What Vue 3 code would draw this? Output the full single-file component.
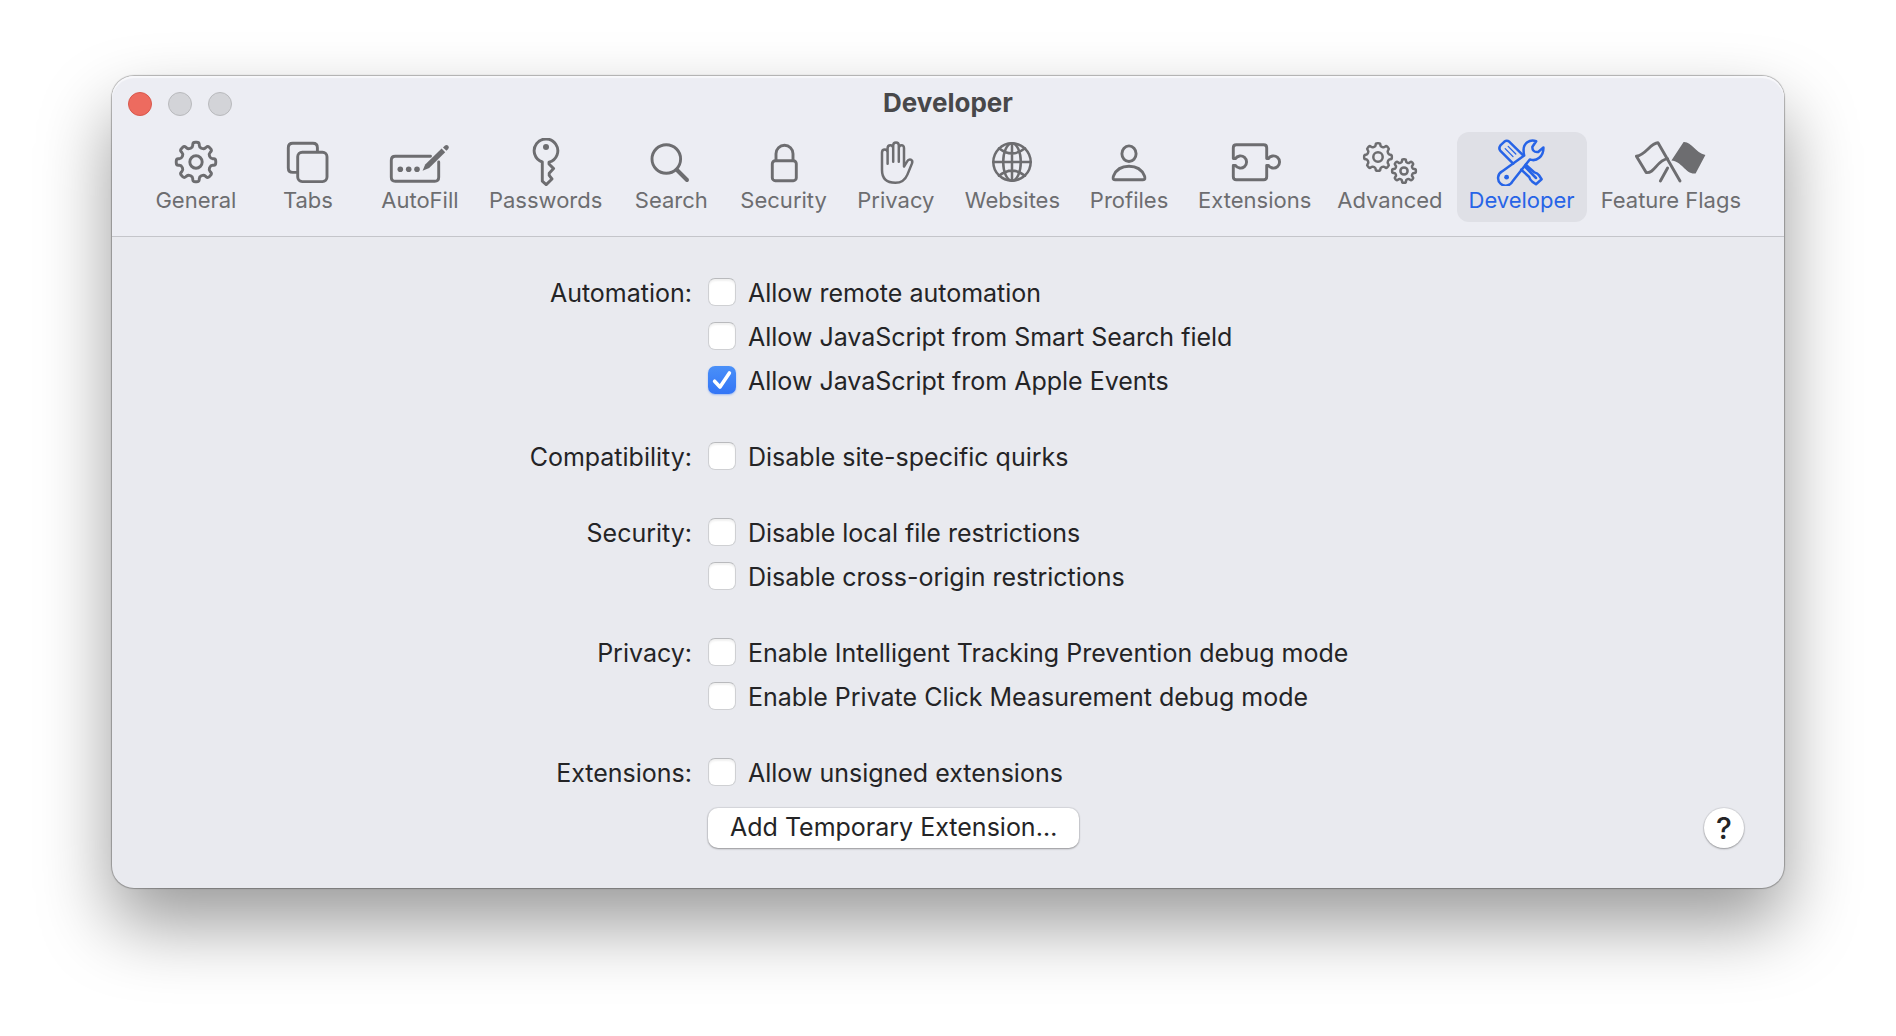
<script setup>
import { reactive, ref } from 'vue'

// Closed outline of an eight-toothed gear with softened corners.
function gearPath(cx, cy, outer, root) {
  const teeth = 8
  const points = []
  for (let i = 0; i < teeth; i++) {
    const mid = (i * 360) / teeth - 90
    for (const [offset, radius] of [[-13, root], [-9, outer], [9, outer], [13, root]]) {
      const angle = ((mid + offset) * Math.PI) / 180
      points.push([cx + radius * Math.cos(angle), cy + radius * Math.sin(angle)])
    }
  }
  const between = (a, b, t) => `${(a[0] + (b[0] - a[0]) * t).toFixed(2)} ${(a[1] + (b[1] - a[1]) * t).toFixed(2)}`
  return points
    .map((p, i) => {
      const prev = points[(i + points.length - 1) % points.length]
      const next = points[(i + 1) % points.length]
      return `${i ? 'L' : 'M'}${between(p, prev, 0.4)}Q${p[0].toFixed(2)} ${p[1].toFixed(2)} ${between(p, next, 0.4)}`
    })
    .join('') + 'Z'
}

const gear = gearPath(36, 24, 20, 15)
const gearBig = gearPath(24, 19, 14, 11)
const gearSmall = gearPath(50, 33, 12, 9)

const tabs = [
  'General', 'Tabs', 'AutoFill', 'Passwords', 'Search', 'Security', 'Privacy',
  'Websites', 'Profiles', 'Extensions', 'Advanced', 'Developer', 'Feature Flags',
]
const active = ref('Developer')

const groups = reactive([
  {
    name: 'Automation',
    options: [
      { text: 'Allow remote automation', on: false },
      { text: 'Allow JavaScript from Smart Search field', on: false },
      { text: 'Allow JavaScript from Apple Events', on: true },
    ],
  },
  { name: 'Compatibility', options: [{ text: 'Disable site-specific quirks', on: false }] },
  {
    name: 'Security',
    options: [
      { text: 'Disable local file restrictions', on: false },
      { text: 'Disable cross-origin restrictions', on: false },
    ],
  },
  {
    name: 'Privacy',
    options: [
      { text: 'Enable Intelligent Tracking Prevention debug mode', on: false },
      { text: 'Enable Private Click Measurement debug mode', on: false },
    ],
  },
  { name: 'Extensions', options: [{ text: 'Allow unsigned extensions', on: false }], action: 'Add Temporary Extension…' },
])
</script>

<template>
  <main class="desktop">
    <section class="window" aria-labelledby="window-title">
      <header class="header">
        <div class="titlebar">
          <div class="lights">
            <button class="light close" type="button" aria-label="Close"></button>
            <button class="light" type="button" aria-label="Minimize" disabled></button>
            <button class="light" type="button" aria-label="Zoom" disabled></button>
          </div>
          <h1 id="window-title" class="title">{{ active }}</h1>
        </div>
        <nav class="toolbar">
          <button
            v-for="tab in tabs"
            :key="tab"
            type="button"
            class="tab"
            :class="{ active: tab === active }"
            @click="active = tab"
          >
            <svg class="icon" viewBox="0 0 72 48" aria-hidden="true">
              <g v-if="tab === 'General'">
                <path :d="gear" />
                <circle cx="36" cy="24" r="6.2" />
              </g>
              <g v-else-if="tab === 'Tabs'">
                <rect x="25.7" y="14.3" width="29.3" height="29.3" rx="4.5" />
                <path d="M45.4 13V9.8Q45.4 5.3 40.9 5.3H20.8Q16.3 5.3 16.3 9.8V29.9Q16.3 34.4 20.8 34.4H24.5" />
              </g>
              <g v-else-if="tab === 'AutoFill'">
                <path d="M46.5 18.3H11.3Q7.3 18.3 7.3 22.3V39.3Q7.3 43.3 11.3 43.3H50.7Q54.7 43.3 54.7 39.3V24" />
                <g class="solid">
                  <circle cx="16.3" cy="31.3" r="2.8" />
                  <circle cx="24.7" cy="31.3" r="2.8" />
                  <circle cx="33" cy="31.3" r="2.8" />
                  <path d="M38.6 32.8L41.2 26.4L57.6 10.6L61.2 14.2L45.2 30Z" />
                  <path d="M59 9.4L61 7.6Q62.6 6.2 64.2 7.8Q65.6 9.4 64.2 11L62.4 12.8Z" />
                </g>
              </g>
              <g v-else-if="tab === 'Passwords'">
                <path d="M32.3 24A11.8 11.8 0 1 1 39 24.2V26L43.6 30.6L39.2 35.2V37.4L42 41L36.2 46.6L32.3 43.2Z" />
                <circle class="solid" cx="36" cy="9" r="3" />
              </g>
              <g v-else-if="tab === 'Search'">
                <circle cx="31.3" cy="21" r="14.3" />
                <path class="heavy" d="M42 32L52 42" />
              </g>
              <g v-else-if="tab === 'Security'">
                <rect x="24.3" y="22.7" width="24" height="20" rx="3" />
                <path d="M28 22.5V15.8A8.5 8.5 0 0 1 45 15.8V22.5" />
              </g>
              <g v-else-if="tab === 'Privacy'" class="fine">
                <path d="M27.6 25.7V10.2Q27.6 7.2 30.4 7.2T33.2 10.2V23.7M33.2 10V7.6Q33.2 4.6 36 4.6T38.8 7.6V23.7M38.8 10.2Q38.8 7.2 41.4 7.2T44 10.2V28.6L47 23.6Q48.4 21 50.8 21.6Q53 22.6 52 25.4L47.4 36.6Q44 44.8 35.4 44.8Q22 44.8 22 32V14.4Q22 11.4 24.8 11.4T27.6 14.4" />
              </g>
              <g v-else-if="tab === 'Websites'" class="fine">
                <circle cx="36" cy="24" r="18.7" />
                <ellipse cx="36" cy="24" rx="8.8" ry="18.7" />
                <path d="M36 5.3V42.7M17.3 24H54.7M23 10.2Q36 20.6 49 10.2M23 37.8Q36 27.4 49 37.8" />
              </g>
              <g v-else-if="tab === 'Profiles'">
                <ellipse cx="36" cy="15.7" rx="7.1" ry="7.8" />
                <path d="M22 41.7H50Q53 41.7 51.4 37.8C48.8 31.6 43 28.3 36 28.3S23.2 31.6 20.6 37.8Q19 41.7 22 41.7Z" />
              </g>
              <g v-else-if="tab === 'Extensions'">
                <path d="M14.3 20.6V9.7Q14.3 6.7 17.3 6.7H44.7Q47.7 6.7 47.7 9.7V20.6H49.4A6.1 6.1 0 1 1 49.4 27.4H47.7V38.7Q47.7 41.7 44.7 41.7H17.3Q14.3 41.7 14.3 38.7V27.4H16.4A6.1 6.1 0 1 0 16.4 20.6Z" />
              </g>
              <g v-else-if="tab === 'Advanced'" class="fine">
                <path :d="gearBig" />
                <circle cx="24" cy="19" r="4.7" />
                <path :d="gearSmall" />
                <circle cx="50" cy="33" r="3.6" />
              </g>
              <g v-else-if="tab === 'Developer'" class="fine">
                <path d="M50.2 3.2C43.6 0.8 37.2 5.4 37.6 12.6Q37.6 15.8 38.2 17.6L16 33.4A7.6 7.6 0 1 0 26.6 43.2L43.8 21.4C50.4 24 57.8 18.6 57.4 9.4L52.2 14Q49 14.4 47.6 12.8T46.4 8.8Z" />
                <circle class="solid" cx="20.6" cy="39.2" r="2.4" />
                <path d="M27.2 25.6L14.2 12.6Q12.4 10 14.4 7.4L18.2 3.8Q20.8 1.8 23.4 3.8L37.2 17.4" />
                <path class="hair" d="M19.2 10.6L27 18.6M22.2 8.4L29.8 16" />
                <path d="M35.2 31.6L43.2 39Q44 42 46.2 43.6L50 46.2L55.6 41.2L53 37.2Q51.6 35.2 48.4 34.4L39.8 26.6M39.4 29.2L50 40" />
              </g>
              <g v-else>
                <path d="M45 43L23 4.8C15 5.2 11 17 1.4 18.2L11.2 34.6C20 35.4 21.6 22.4 32.6 20.6" />
                <path d="M32.6 30L25.4 43" />
                <path class="solid" d="M48.6 4C56.4 3.4 60 14.4 70.4 17L60.6 35.4C51 36.8 47 23 36.4 22.4Z" />
              </g>
            </svg>
            <span class="tab-label">{{ tab }}</span>
          </button>
        </nav>
      </header>

      <form class="content" @submit.prevent>
        <div v-for="group in groups" :key="group.name" class="group" role="group" :aria-label="group.name">
          <span class="group-name">{{ group.name }}:</span>
          <div class="options">
            <label v-for="option in group.options" :key="option.text" class="option">
              <span class="check">
                <input v-model="option.on" type="checkbox" class="box" />
                <svg v-if="option.on" class="tick" viewBox="0 0 28 28" aria-hidden="true">
                  <path d="M6.6 15.2L12 21L21.4 7" />
                </svg>
              </span>
              <span class="option-text">{{ option.text }}</span>
            </label>
            <div v-if="group.action" class="actions">
              <button type="button" class="push">{{ group.action }}</button>
              <button type="button" class="help" aria-label="Help">?</button>
            </div>
          </div>
        </div>
      </form>
    </section>
  </main>
</template>

<style>
body {
  margin: 0;
  background: #fff;
}
</style>

<style scoped>
.desktop {
  padding: 76px 112px 148px;
  font-family: Inter, "Liberation Sans", sans-serif;
  color: #242426;
}

.window {
  border-radius: 22px;
  background: #e9eaef;
  box-shadow:
    0 0 1px 1px rgba(0, 0, 0, 0.28),
    0 36px 72px rgba(0, 0, 0, 0.4);
}

.header {
  padding-bottom: 14px;
  border-bottom: 1px solid #c4c5ca;
  border-radius: 22px 22px 0 0;
  background: #ecedf3;
  box-shadow: inset 0 2px 1px #f8f8fb;
}

.titlebar {
  display: grid;
  grid-template-columns: 1fr auto 1fr;
  align-items: center;
  height: 56px;
  padding: 0 16px;
}

.lights {
  display: flex;
  gap: 16px;
}

.light {
  width: 24px;
  height: 24px;
  padding: 0;
  border: 1px solid #b9babd;
  border-radius: 50%;
  background: #d3d4d8;
}

.close {
  border-color: #d9584c;
  background: #ed6b5f;
}

.title {
  margin: 0;
  padding-bottom: 2px;
  font-size: 26px;
  line-height: 32px;
  font-weight: 700;
  color: #48484a;
}

.toolbar {
  display: flex;
  justify-content: center;
  gap: 2px;
  padding-right: 2px;
}

.tab {
  display: flex;
  flex-direction: column;
  align-items: center;
  box-sizing: border-box;
  min-width: 110px;
  height: 90px;
  padding: 6px 12px;
  border: 0;
  border-radius: 12px;
  background: none;
  font: inherit;
  color: #6d6d70;
}

.tab.active {
  background: #dfe0e6;
  color: #2764e7;
}

.tab-label {
  font-size: 22px;
  line-height: 28px;
  white-space: nowrap;
}

.icon {
  width: 72px;
  height: 48px;
  flex: none;
  fill: none;
  stroke: currentColor;
  stroke-width: 2.9;
  stroke-linecap: round;
  stroke-linejoin: round;
}

.fine {
  stroke-width: 2.5;
}

.hair {
  stroke-width: 1.3;
}

.heavy {
  stroke-width: 4;
}

.solid {
  fill: currentColor;
  stroke: none;
}

.content {
  display: flex;
  flex-direction: column;
  gap: 32px;
  padding: 33px 40px 40px 0;
}

.group {
  display: grid;
  grid-template-columns: calc(50% - 236px) 1fr;
  column-gap: 16px;
  font-size: 25px;
  line-height: 44px;
}

.group-name,
.option-text {
  padding-top: 2px;
  line-height: 42px;
}

.group-name {
  text-align: right;
}

.options {
  display: flex;
  flex-direction: column;
}

.option {
  display: flex;
  align-items: center;
  gap: 12px;
  white-space: nowrap;
}

.check {
  display: grid;
}

.box,
.tick {
  grid-area: 1 / 1;
  width: 28px;
  height: 28px;
}

.box {
  appearance: none;
  box-sizing: border-box;
  margin: 0;
  border: 1px solid #cfd0d3;
  border-top-color: #b9babd;
  border-radius: 7px;
  background: #fff;
  box-shadow: inset 0 2px 2px rgba(0, 0, 0, 0.06);
}

.box:checked {
  border: 0;
  background: linear-gradient(#4a90f8, #3375f6);
  box-shadow: 0 1px 2px rgba(51, 117, 246, 0.4);
}

.tick {
  pointer-events: none;
  fill: none;
  stroke: #fff;
  stroke-width: 3.6;
  stroke-linecap: round;
  stroke-linejoin: round;
}

.actions {
  display: flex;
  justify-content: space-between;
  padding-top: 14px;
}

.push,
.help {
  height: 40px;
  border: 0;
  background: #fff;
  box-shadow:
    0 0 1px 1px rgba(0, 0, 0, 0.08),
    0 1px 2px rgba(0, 0, 0, 0.3);
  color: inherit;
  font: inherit;
  line-height: 38px;
}

.push {
  padding: 0 22px 2px;
  border-radius: 10px;
}

.help {
  width: 40px;
  padding: 0;
  border-radius: 50%;
  font-size: 30px;
  font-weight: 500;
}
</style>
